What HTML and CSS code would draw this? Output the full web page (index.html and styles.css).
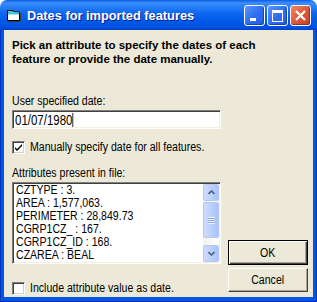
FILE: index.html
```html
<!DOCTYPE html>
<html>
<head>
    <title>Dates for imported features</title>
    <link rel="stylesheet" href="styles.css">
</head>
<body>
    <!-- Dialog window -->
    <div class="window">
        <div class="titlebar">
            <svg class="app-icon" width="14" height="12" viewBox="0 0 14 12">
                <path d="M0.5 0.5 H6 L7 2 H12.5 V10.5 H0.5 Z" fill="#ffffff" stroke="#000000"/>
                <rect x="1" y="1" width="5" height="2" fill="#39c6d6"/>
                <rect x="1" y="2.5" width="11" height="2" fill="#39c6d6"/>
                <line x1="13.5" y1="3" x2="13.5" y2="11.5" stroke="#3c3c3c"/>
                <line x1="1.5" y1="11.5" x2="13.5" y2="11.5" stroke="#3c3c3c"/>
            </svg>
            <span class="title">Dates for imported features</span>
            <div class="caption-buttons">
                <div class="cap cap-min"><span></span></div>
                <div class="cap cap-max"><span></span></div>
                <div class="cap cap-close">
                    <svg width="13" height="13" viewBox="0 0 13 13">
                        <path d="M2 2 L11 11 M11 2 L2 11" stroke="#ffffff" stroke-width="2.2"/>
                    </svg>
                </div>
            </div>
        </div>

        <div class="frame">
            <div class="client">
                <p class="intro">Pick an attribute to specify the dates of each<br>feature or provide the date manually.</p>

                <!-- Date field -->
                <div class="field-label date-label"><span class="narrow">User specified date:</span></div>
                <div class="textbox"><span class="narrow date-value">01/07/1980<span class="caret"></span></span></div>

                <label class="check check-manual">
                    <span class="box">
                        <svg width="9" height="9" viewBox="0 0 9 9">
                            <path d="M1 4 L3 6 L8 1 V3 L3 8 L1 6 Z" fill="#000000"/>
                        </svg>
                    </span>
                    <span class="narrow">Manually specify date for all features.</span>
                </label>

                <div class="lower">
                    <div class="lower-left">
                        <div class="field-label"><span class="narrow">Attributes present in file:</span></div>
                        <!-- Attribute list -->
                        <div class="listbox">
                            <ul class="items">
                                <li><span class="narrow">CZTYPE : 3.</span></li>
                                <li><span class="narrow">AREA : 1,577,063.</span></li>
                                <li><span class="narrow">PERIMETER : 28,849.73</span></li>
                                <li><span class="narrow">CGRP1CZ_ : 167.</span></li>
                                <li><span class="narrow">CGRP1CZ_ID : 168.</span></li>
                                <li><span class="narrow">CZAREA : BEAL</span></li>
                            </ul>
                            <div class="scrollbar">
                                <div class="sb-btn">
                                    <svg width="7" height="5" viewBox="0 0 7 5"><path d="M0.5 4 L3.5 1 L6.5 4" fill="none" stroke="#4d6185" stroke-width="1.6"/></svg>
                                </div>
                                <div class="sb-thumb"><span></span></div>
                                <div class="sb-track"></div>
                                <div class="sb-btn">
                                    <svg width="7" height="5" viewBox="0 0 7 5"><path d="M0.5 1 L3.5 4 L6.5 1" fill="none" stroke="#4d6185" stroke-width="1.6"/></svg>
                                </div>
                            </div>
                        </div>
                        <label class="check check-include">
                            <span class="box"></span>
                            <span class="narrow">Include attribute value as date.</span>
                        </label>
                    </div>
                    <div class="actions">
                        <button class="btn btn-default"><span class="narrow">OK</span></button>
                        <button class="btn"><span class="narrow">Cancel</span></button>
                    </div>
                </div>
            </div>
        </div>
    </div>
</body>
</html>
```

FILE: styles.css
```css
/* Dialog styles */

body {
    margin: 0;
    background: #ffffff;
    font-family: 'Liberation Sans', Arial, sans-serif;
}

.window {
    width: 317px;
    height: 302px;
    display: flex;
    flex-direction: column;
}

/* Narrow face look-alike (no condensed font installed) */
.narrow {
    display: inline-block;
    transform: scaleX(0.88);
    transform-origin: left center;
    white-space: nowrap;
}

/* Title bar */
.titlebar {
    height: 30px;
    box-sizing: border-box;
    display: flex;
    align-items: center;
    padding: 0 6px 0 7px;
    border-radius: 7px 7px 0 0;
    background: linear-gradient(#0a5ce8 0%, #3d8ffb 10%, #2a82f8 20%, #0d66ef 45%, #0058e6 75%, #0050dd 92%, #003fc6 100%);
}

.app-icon {
    margin-top: 1px;
    flex-shrink: 0;
}

.title {
    margin-left: 6px;
    font-size: 12.8px;
    font-weight: bold;
    color: #ffffff;
    text-shadow: 1px 1px #0a1e8c;
}

.caption-buttons {
    margin-left: auto;
    display: flex;
    gap: 2px;
    margin-top: 1px;
}

.cap {
    width: 21px;
    height: 21px;
    box-sizing: border-box;
    border: 1px solid #ffffff;
    border-radius: 3px;
    background: linear-gradient(135deg, #5e97fb 0%, #2f6ff0 50%, #2560e6 100%);
    box-shadow: inset -1px -1px 1px rgba(0, 30, 140, 0.5);
    position: relative;
    display: flex;
    align-items: center;
    justify-content: center;
}

.cap-min span {
    position: absolute;
    left: 5px;
    bottom: 4px;
    width: 6px;
    height: 3px;
    background: #ffffff;
}

.cap-max span {
    width: 9px;
    height: 8px;
    border: 1px solid #ffffff;
    border-top-width: 3px;
}

.cap-close {
    background: linear-gradient(135deg, #f08a6c 0%, #e0573a 50%, #cc4426 100%);
}

/* Window frame */
.frame {
    flex: 1;
    display: flex;
    padding: 0 4px 5px 4px;
    background: #0055e5;
    box-shadow: inset 1px 0 #0036c0, inset -1px 0 #0036c0, inset 0 -1px #0031b0;
}

.client {
    flex: 1;
    background: #ece9d8;
    padding: 8px 5px 0 8px;
    font-size: 12px;
    color: #000000;
}

.intro {
    margin: 0;
    font-size: 11.5px;
    font-weight: bold;
    line-height: 14px;
    white-space: nowrap;
}

.field-label {
    line-height: 14px;
}

.date-label {
    margin-top: 28px;
}

/* Text box */
.textbox {
    margin-top: 2px;
    width: 209px;
    height: 19px;
    box-sizing: border-box;
    background: #ffffff;
    border: 1px solid;
    border-color: #808080 #ffffff #ffffff #808080;
    box-shadow: inset 1px 1px #404040, inset -1px -1px #f1efe2;
    padding: 1px 0 0 2px;
    font-size: 14px;
    line-height: 16px;
}

.date-value {
    transform: scaleX(0.82);
}

.caret {
    display: inline-block;
    vertical-align: top;
    width: 1px;
    height: 14px;
    margin-top: 1px;
    background: #000000;
}

/* Check boxes */
.check {
    display: flex;
    align-items: center;
    gap: 5px;
    line-height: 14px;
}

.check-manual {
    margin-top: 11px;
}

.check-include {
    margin-top: 17px;
}

.box {
    width: 13px;
    height: 13px;
    flex-shrink: 0;
    box-sizing: border-box;
    background: #ffffff;
    border: 1px solid;
    border-color: #808080 #ffffff #ffffff #808080;
    box-shadow: inset 1px 1px #404040, inset -1px -1px #d4d0c8;
    display: flex;
    align-items: center;
    justify-content: center;
}

/* Lower section */
.lower {
    display: flex;
    margin-top: 12px;
}

.lower-left {
    width: 209px;
}

.listbox {
    margin-top: 2px;
    height: 82px;
    box-sizing: border-box;
    background: #ffffff;
    border: 1px solid;
    border-color: #808080 #ffffff #ffffff #808080;
    box-shadow: inset 1px 1px #404040, inset -1px -1px #f1efe2;
    padding: 1px;
    display: flex;
}

.items {
    list-style: none;
    margin: 0;
    padding: 0 0 0 2px;
    flex: 1;
    line-height: 13px;
}

.scrollbar {
    width: 16px;
    display: flex;
    flex-direction: column;
    background: linear-gradient(90deg, #f3f1ec, #fefefb);
}

.sb-btn, .sb-thumb {
    box-sizing: border-box;
    border: 1px solid #b4c8f6;
    border-radius: 2px;
    background: linear-gradient(90deg, #cfdcfd, #b9cdfb 60%, #adc3f6);
    display: flex;
    align-items: center;
    justify-content: center;
}

.sb-btn {
    height: 17px;
}

.sb-thumb {
    height: 36px;
    margin-top: 1px;
}

.sb-thumb span {
    width: 7px;
    height: 7px;
    background: repeating-linear-gradient(#eef3fe 0, #eef3fe 1px, #8ea6de 1px, #8ea6de 2px);
}

.sb-track {
    flex: 1;
}

/* Buttons */
.actions {
    margin-left: auto;
    display: flex;
    flex-direction: column;
    justify-content: flex-end;
    gap: 3px;
    padding-bottom: 3px;
}

.btn {
    width: 80px;
    height: 24px;
    box-sizing: border-box;
    background: #ece9d8;
    border: 1px solid;
    border-color: #ffffff #404040 #404040 #ffffff;
    box-shadow: inset -1px -1px #aca899;
    font-family: 'Liberation Sans', Arial, sans-serif;
    font-size: 12px;
    color: #000000;
    padding: 0;
}

.btn .narrow {
    transform-origin: center center;
}

.btn-default {
    height: 25px;
    border: 1px solid #000000;
    box-shadow: inset 1px 1px #ffffff, inset -1px -1px #404040, inset -2px -2px #aca899;
}
```
